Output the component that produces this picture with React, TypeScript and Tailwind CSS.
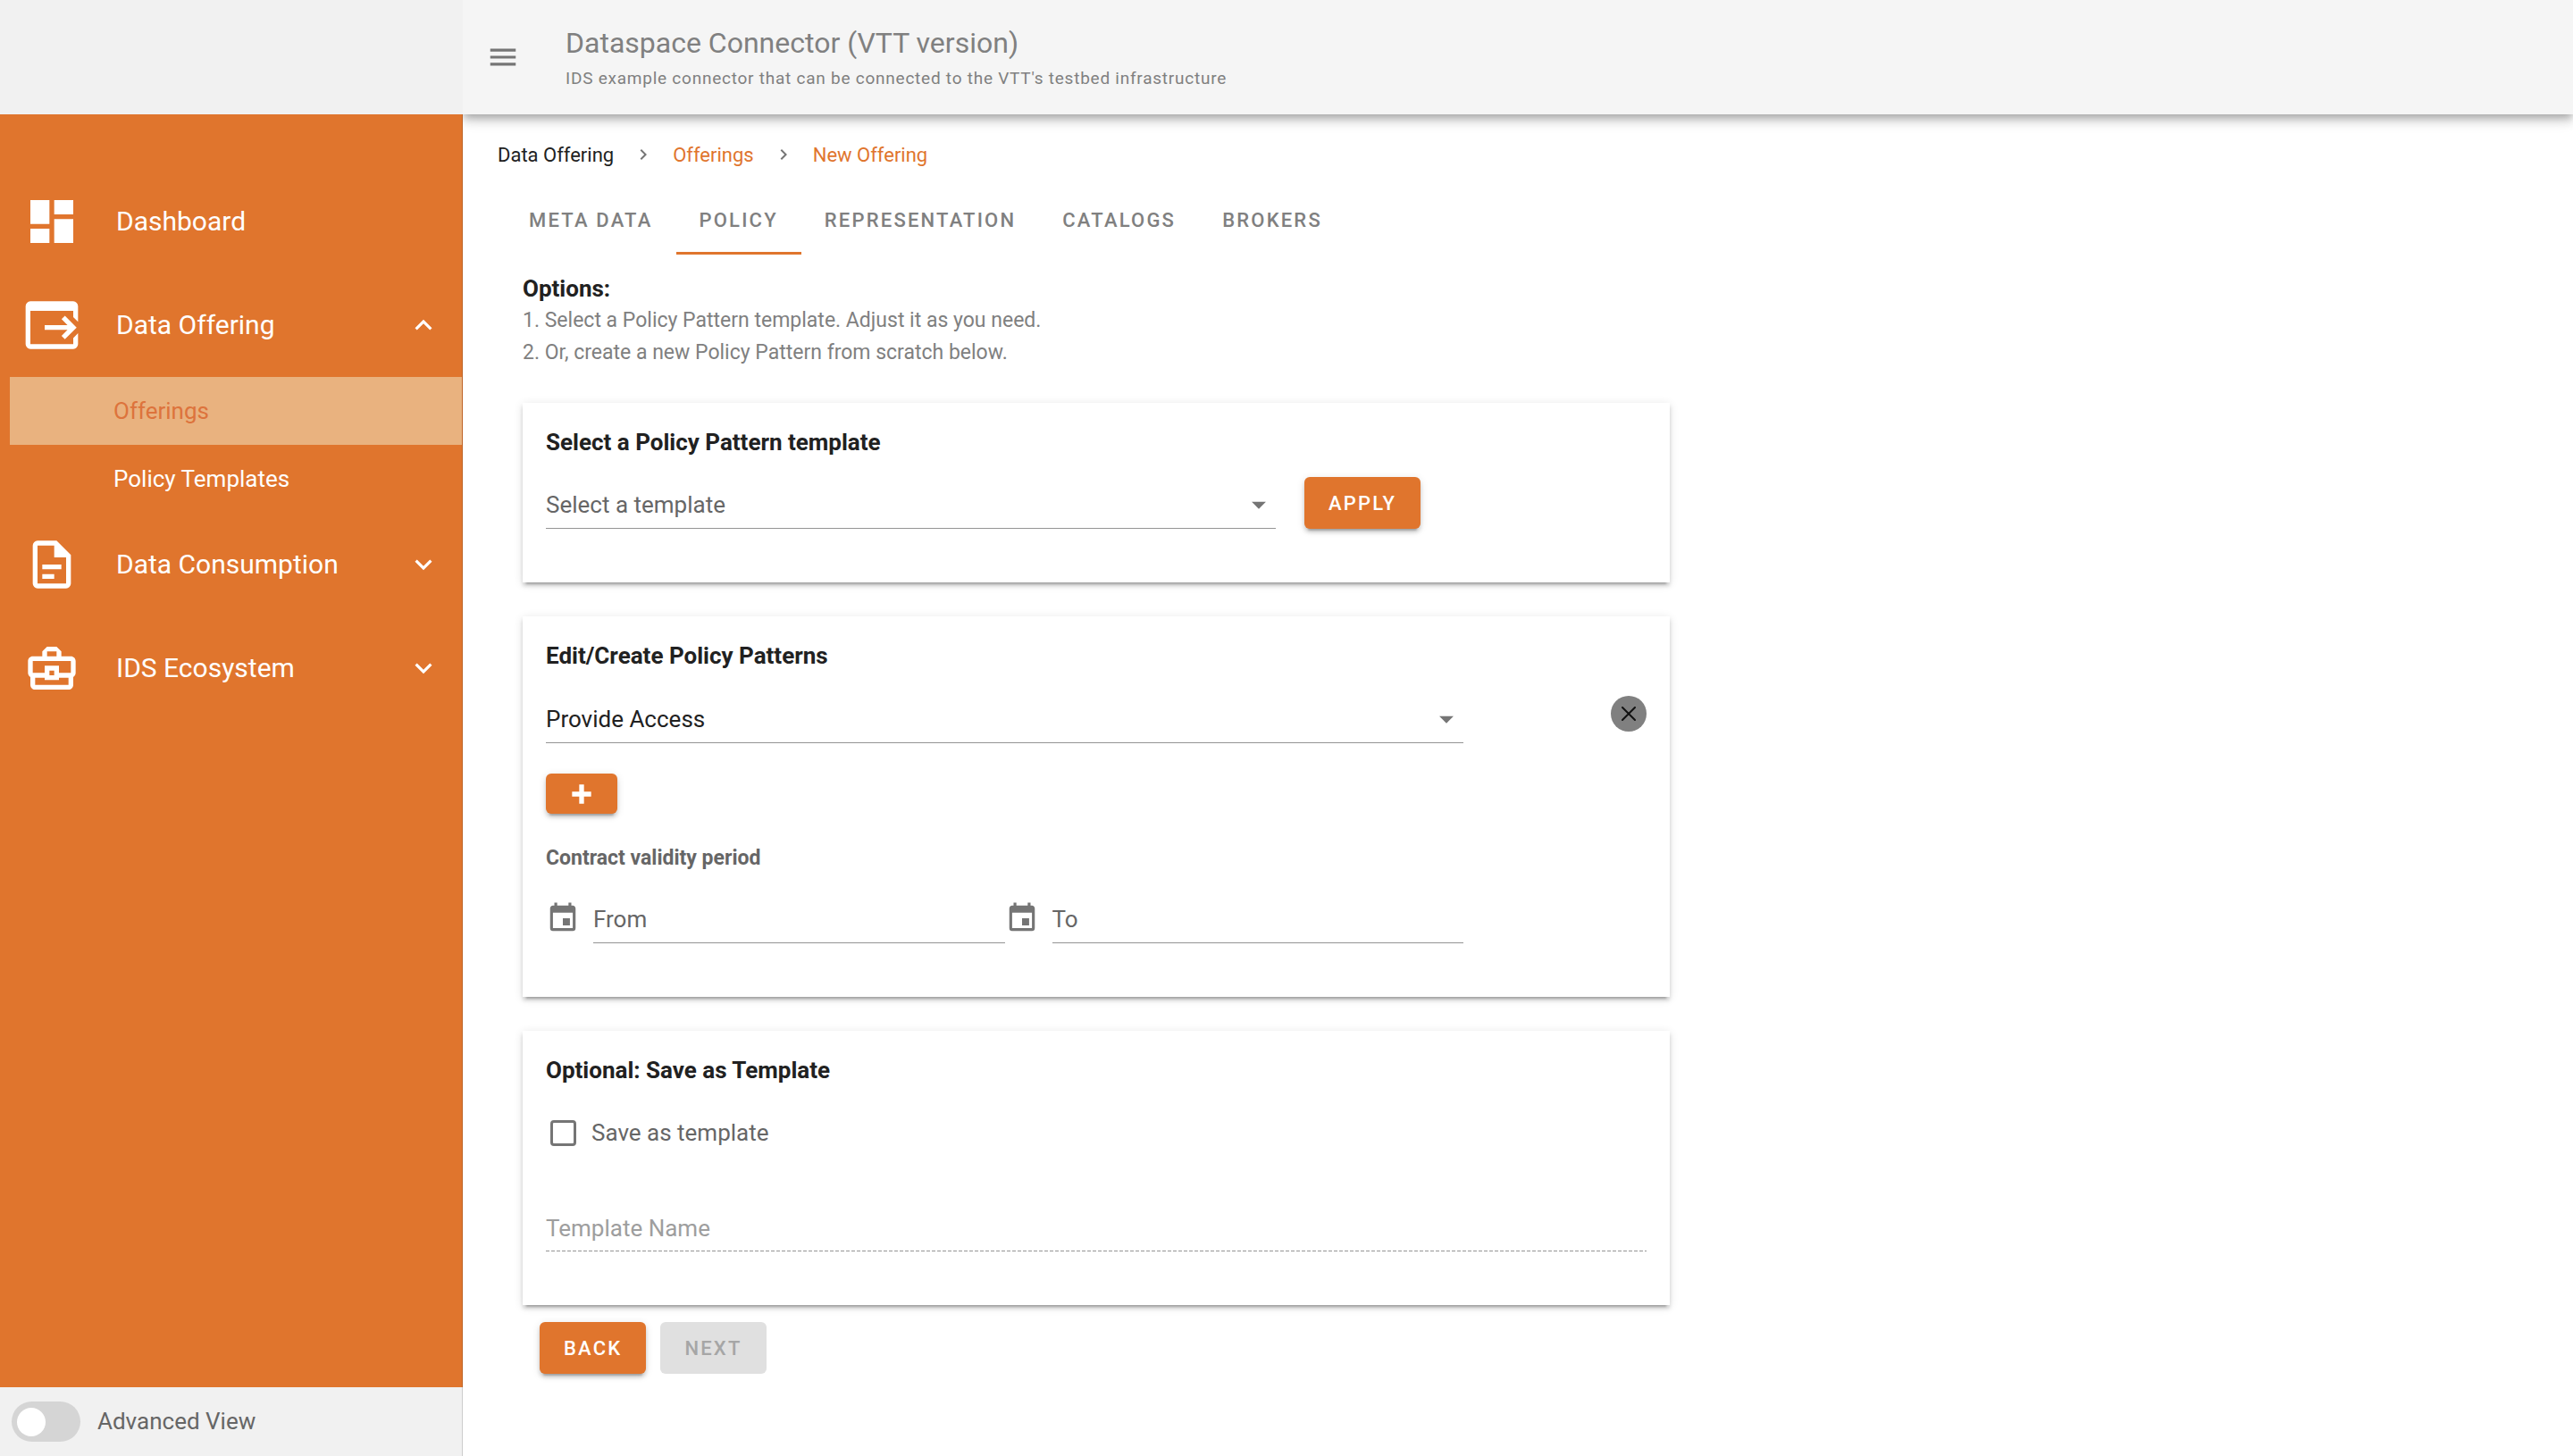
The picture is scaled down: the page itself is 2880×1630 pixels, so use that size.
import type { ReactNode } from "react";

const paths = {
  dashboard: "M13,3V9H21V3M13,21H21V11H13M3,21H11V15H3M3,13H11V3H3V13Z",
  exportIcon:
    "M9,12H18.59L16.09,9.5L17.5,8.09L22.41,13L17.5,17.92L16.09,16.5L18.59,14H9V12M21,17.42V20H3V6H21V8.58L23,10.58V4A2,2 0 0,0 21,2H3A2,2 0 0,0 1,4V20A2,2 0 0,0 3,22H21A2,2 0 0,0 23,20V15.42L21,17.42Z",
  document:
    "M6,2A2,2 0 0,0 4,4V20A2,2 0 0,0 6,22H18A2,2 0 0,0 20,20V8L14,2H6M6,4H13V9H18V20H6V4M8,12V14H16V12H8M8,16V18H13V16H8Z",
  briefcase:
    "M20,7H16V5L14,3H10L8,5V7H4C2.9,7 2,7.9 2,9V14C2,14.75 2.4,15.38 3,15.73V19C3,20.11 3.89,21 5,21H19C20.11,21 21,20.11 21,19V15.72C21.59,15.37 22,14.73 22,14V9C22,7.9 21.1,7 20,7M10,5H14V7H10V5M4,9H20V14H15V11H9V14H4V9M13,15H11V13H13V15M19,19H5V16H9V17H15V16H19V19Z",
  up: "M7.41,15.41L12,10.83L16.59,15.41L18,14L12,8L6,14L7.41,15.41Z",
  down: "M7.41,8.58L12,13.17L16.59,8.58L18,10L12,16L6,10L7.41,8.58Z",
  right: "M8.59,16.58L13.17,12L8.59,7.41L10,6L16,12L10,18L8.59,16.58Z",
  menu: "M3,6H21V8H3V6M3,11H21V13H3V11M3,16H21V18H3V16Z",
  caret: "M7,10L12,15L17,10H7Z",
  plus: "M20,14H14V20H10V14H4V10H10V4H14V10H20V14Z",
  calendar:
    "M19,19H5V8H19M16,1V3H8V1H6V3H5C3.89,3 3,3.89 3,5V19A2,2 0 0,0 5,21H19A2,2 0 0,0 21,19V5C21,3.89 20.1,3 19,3H18V1M17,12H12V17H17V12Z",
};

type IconName = keyof typeof paths;

function Icon({ name, className }: { name: IconName; className: string }) {
  return (
    <svg viewBox="0 0 24 24" className={`shrink-0 fill-current ${className}`} aria-hidden="true">
      <path d={paths[name]} />
    </svg>
  );
}

const raised =
  "shadow-[0_6px_2px_-4px_rgba(0,0,0,0.2),0_4px_4px_0_rgba(0,0,0,0.14),0_2px_10px_0_rgba(0,0,0,0.12)]";

function NavItem({ icon, label, arrow }: { icon: IconName; label: string; arrow?: "up" | "down" }) {
  return (
    <button type="button" className="flex h-[116px] w-full items-center pr-6 pl-[26px] text-left text-[30px]">
      <Icon name={icon} className="size-16" />
      <span className="ml-10 flex-1 pb-0.5">{label}</span>
      {arrow && <Icon name={arrow} className="size-[38px]" />}
    </button>
  );
}

function Card({ title, children }: { title: string; children: ReactNode }) {
  return (
    <section className={`bg-white px-[26px] pt-6 pb-[60px] ${raised}`}>
      <h2 className="pb-0.5 text-[26px] leading-10 font-bold">{title}</h2>
      {children}
    </section>
  );
}

function Select({ label, value, className }: { label: string; value: string; className: string }) {
  return (
    <div className={`grid items-center border-b border-[#949494] ${className}`}>
      <select
        aria-label={label}
        className="col-start-1 row-start-1 h-[52px] w-full appearance-none bg-transparent text-[26px]"
      >
        <option>{value}</option>
      </select>
      <Icon
        name="caret"
        className="pointer-events-none col-start-1 row-start-1 size-[38px] justify-self-end text-[#757575]"
      />
    </div>
  );
}

function DateField({ id, label }: { id: string; label: string }) {
  return (
    <div className="flex flex-1 items-start">
      <label htmlFor={id} aria-label={label} className="mr-[15px] text-[#757575]">
        <Icon name="calendar" className="size-[38px]" />
      </label>
      <input
        id={id}
        placeholder={label}
        className="h-[47px] min-w-0 flex-1 border-b border-[#949494] pb-1.5 text-[26px] placeholder:text-[#666666]"
      />
    </div>
  );
}

function Button({ children, disabled }: { children: ReactNode; disabled?: boolean }) {
  return (
    <button
      type="button"
      disabled={disabled}
      className={`h-[58px] rounded-md px-[27px] text-[22px] font-medium tracking-widest ${
        disabled ? "bg-[#e0e0e0] text-[#a6a6a6]" : `bg-[#e0752d] text-white ${raised}`
      }`}
    >
      {children}
    </button>
  );
}

const tabs = ["META DATA", "POLICY", "REPRESENTATION", "CATALOGS", "BROKERS"];

export default function App() {
  return (
    <div className="flex min-h-screen bg-white font-[Roboto,sans-serif] text-[#212121]">
      <aside className="relative z-10 flex w-[518px] shrink-0 flex-col">
        <div className="h-32 bg-[#f1f1f1]" />
        <nav className="flex flex-1 flex-col border-r border-black/15 bg-[#e0752d] pt-[62px] text-white">
          <NavItem icon="dashboard" label="Dashboard" />
          <NavItem icon="exportIcon" label="Data Offering" arrow="up" />
          <a
            href="#offerings"
            className="ml-[11px] flex h-[76px] items-center bg-[#e9b27f] pl-[116px] text-[26px] text-[#dd733c]"
          >
            Offerings
          </a>
          <a href="#templates" className="ml-[11px] flex h-[76px] items-center pl-[116px] text-[26px]">
            Policy Templates
          </a>
          <NavItem icon="document" label="Data Consumption" arrow="down" />
          <NavItem icon="briefcase" label="IDS Ecosystem" arrow="down" />
        </nav>
        <label className="flex h-[77px] items-center border-r border-black/15 bg-[#f1f1f1] pl-[13px] text-[26px] text-[#666666]">
          <input
            type="checkbox"
            role="switch"
            className="mr-[19px] flex h-[45px] w-[77px] appearance-none items-center rounded-full bg-[#d5d5d5] pl-1.5 before:size-8 before:rounded-full before:bg-white"
          />
          Advanced View
        </label>
      </aside>

      <div className="flex min-w-0 flex-1 flex-col">
        <header className="flex h-32 items-center bg-[#f5f5f5] pl-[26px] text-[#808080] shadow-[0_4px_8px_-2px_rgba(0,0,0,0.2),0_8px_10px_0_rgba(0,0,0,0.14),0_2px_20px_0_rgba(0,0,0,0.12)]">
          <button type="button" aria-label="Menu" className="text-[#757575]">
            <Icon name="menu" className="size-[38px]" />
          </button>
          <div className="ml-[51px] pt-2">
            <h1 className="text-[32px] leading-10">Dataspace Connector (VTT version)</h1>
            <p className="text-[19px] leading-10 tracking-[0.04em]">
              IDS example connector that can be connected to the VTT&apos;s testbed infrastructure
            </p>
          </div>
        </header>

        <main>
          <nav aria-label="Breadcrumb" className="flex h-[90px] items-center pl-[39px] text-[22px]">
            <span>Data Offering</span>
            <Icon name="right" className="mx-[21px] size-6 text-[#757575]" />
            <a href="#offerings" className="text-[#e0752d]">
              Offerings
            </a>
            <Icon name="right" className="mx-[21px] size-6 text-[#757575]" />
            <a href="#new" className="text-[#e0752d]">
              New Offering
            </a>
          </nav>

          <div role="tablist" className="ml-12 flex h-[67px]">
            {tabs.map((tab) => (
              <button
                key={tab}
                type="button"
                role="tab"
                aria-selected={tab === "POLICY"}
                className="border-b-[3px] border-transparent px-[26px] pb-2 text-[22px] font-medium tracking-widest text-[#808080] aria-selected:border-[#e0752d]"
              >
                {tab}
              </button>
            ))}
          </div>

          <div className="mt-5 ml-[67px] w-[55%] max-w-[1284px]">
            <h2 className="text-[26px] leading-9 font-bold">Options:</h2>
            <ol className="text-[23px] leading-9 text-[#808080]">
              <li>1. Select a Policy Pattern template. Adjust it as you need.</li>
              <li>2. Or, create a new Policy Pattern from scratch below.</li>
            </ol>

            <div className="mt-[38px] flex flex-col gap-[38px]">
              <Card title="Select a Policy Pattern template">
                <div className="mt-[17px] flex items-end gap-8">
                  <Select label="Policy template" value="Select a template" className="w-[817px] text-[#666666]" />
                  <Button>APPLY</Button>
                </div>
              </Card>

              <Card title="Edit/Create Policy Patterns">
                <div className="mt-[23px] flex items-start justify-between">
                  <Select label="Policy pattern" value="Provide Access" className="w-[1027px]" />
                  <button
                    type="button"
                    aria-label="Remove pattern"
                    className="flex size-10 items-center justify-center rounded-full bg-[#808080] text-[#111111]"
                  >
                    <svg viewBox="0 0 16 16" className="size-4" fill="none" stroke="currentColor" strokeWidth="2" strokeLinecap="round" aria-hidden="true">
                      <path d="M1 1L15 15M15 1L1 15" />
                    </svg>
                  </button>
                </div>
                <button
                  type="button"
                  aria-label="Add pattern"
                  className={`mt-[34px] flex h-[45px] w-20 items-center justify-center rounded-md bg-[#e0752d] text-white ${raised}`}
                >
                  <Icon name="plus" className="size-8" />
                </button>
                <h3 className="mt-8 text-[23px] leading-9 font-bold text-[#666666]">Contract validity period</h3>
                <div className="mt-[30px] flex w-[1027px]">
                  <DateField id="from" label="From" />
                  <DateField id="to" label="To" />
                </div>
              </Card>

              <Card title="Optional: Save as Template">
                <label className="mt-7 flex h-10 items-center text-[26px] text-[#666666]">
                  <input
                    type="checkbox"
                    className="mr-[17px] ml-[5px] size-[29px] appearance-none rounded-[4px] border-[3px] border-[#757575]"
                  />
                  Save as template
                </label>
                <input
                  aria-label="Template Name"
                  placeholder="Template Name"
                  disabled
                  className="mt-[61px] block h-[52px] w-full bg-[repeating-linear-gradient(90deg,#949494_0_4px,transparent_4px_6px)] bg-[length:100%_1px] bg-bottom bg-no-repeat text-[26px] placeholder:text-[#9e9e9e]"
                />
              </Card>
            </div>

            <div className="mt-[19px] ml-[19px] flex gap-4">
              <Button>BACK</Button>
              <Button disabled>NEXT</Button>
            </div>
          </div>
        </main>
      </div>
    </div>
  );
}
